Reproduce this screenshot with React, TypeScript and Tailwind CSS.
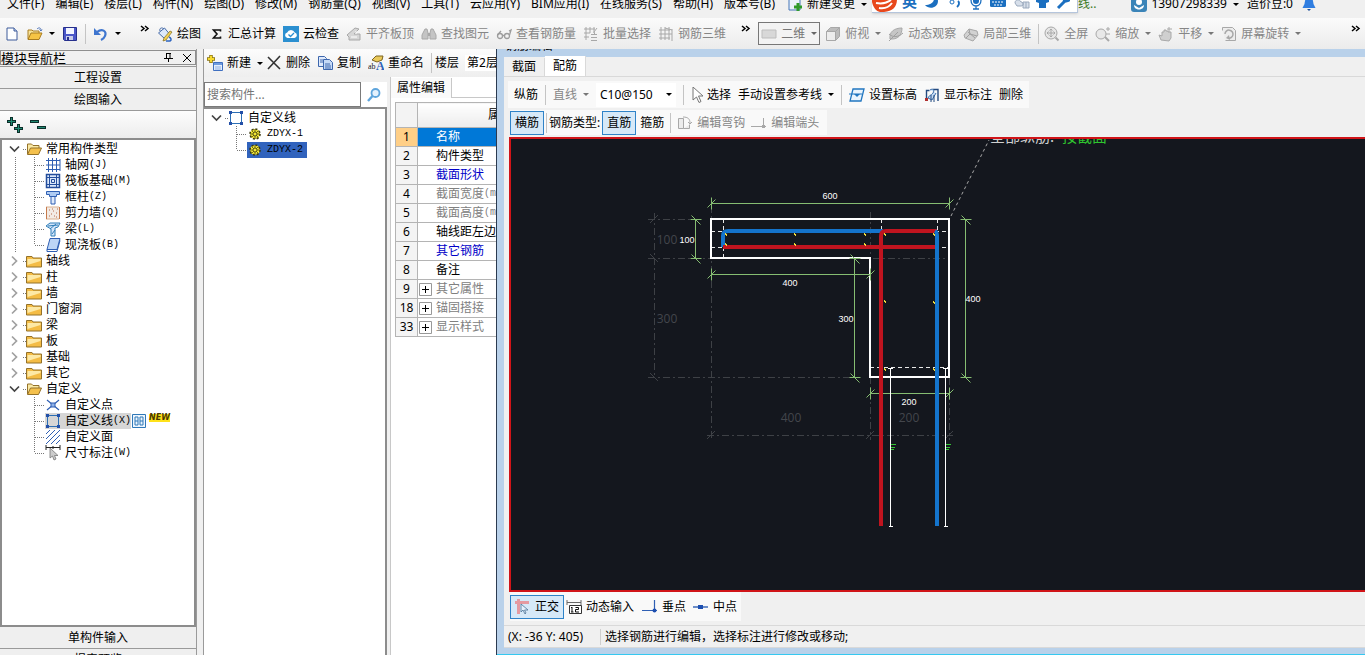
import type { ReactNode } from "react";
import clsx from "clsx";

const BLUE = "#2f5fb3";
const GRAY = "#a8a8a8";

/* 16x16 glyphs used by the toolbars and the trees */
const ICONS: Record<string, ReactNode> = {
  newFile: (
    <>
      <path d="M3 2h7l3 3v9H3z" fill="#fdfeff" stroke="#3c5a9a" />
      <path d="M10 2v3h3" fill="#c5d6f2" stroke="#3c5a9a" />
    </>
  ),
  open: (
    <>
      <path d="M1 13V4h4l1 1h6v3" fill="#f8e49a" stroke="#a97c20" />
      <path d="M1 13.500 4 7h11l-3 6.500z" fill="#f6c445" stroke="#a97c20" />
      <path d="M10 3c2-2 4-1 4 1m-1.500-.5L14 5l1-1.500" fill="none" stroke="#4f74b8" />
    </>
  ),
  save: (
    <>
      <path d="M1.500 1.500h13v13h-12l-1-1z" fill="#4a56c8" stroke="#262f8c" />
      <path d="M4 2h8v6H4z" fill="#f2f4ff" />
      <path d="M4 10h7v4H4z" fill="#c8cce8" />
      <path d="M5 11h2v3H5z" fill="#262f8c" />
    </>
  ),
  undo: (
    <>
      <path d="M4 6c5-4 10-1 8 4-.6 1.800-2 3-4 4" fill="none" stroke="#3f76cf" strokeWidth="2.200" />
      <path d="M1 2v7h7z" fill="#3f76cf" />
    </>
  ),
  paint: (
    <>
      <path d="m1.500 7 6-5 5 6-5 4.500z" fill="#dce9fb" stroke="#466aa8" />
      <path d="M3 5c-1-3 2-4 4-2" fill="none" stroke="#466aa8" />
      <path d="m15 6-6 8-3 1 1-3 6-7z" fill="#f2d254" stroke="#7f6a1f" strokeWidth=".7" />
      <path d="M12 11c2 1 3 3 1 4H9" fill="none" stroke="#2e65c0" strokeWidth="1.500" />
    </>
  ),
  sigma: <path d="M12.500 5.500V4h-7l3.500 4-3.500 4h7v-1.500" fill="none" stroke="#111" strokeWidth="1.600" />,
  cloud: (
    <>
      <rect width="16" height="16" fill="#2b8fd0" />
      <path d="M4.500 12a2.800 2.800 0 0 1-.3-5.500 4 4 0 0 1 7.500 0A2.800 2.800 0 0 1 11.500 12z" fill="#fff" />
      <path d="m5.500 8.500 2 2 3.500-3.500" fill="none" stroke="#2b8fd0" strokeWidth="1.300" />
    </>
  ),
  level: (
    <>
      <path d="m1 9 8-7 4 1-5 5h6v6H3v-3z" fill="#d6d6d6" stroke={GRAY} />
      <path d="M5 11h6M10 5v3" stroke="#fff" />
    </>
  ),
  find: (
    <>
      <path d="M4 3h2l1 4v6H1V9zM12 3h-2L9 7v6h6V9z" fill="#c4c4c4" stroke={GRAY} />
      <path d="M7 7h2v3H7z" fill={GRAY} />
    </>
  ),
  glasses: (
    <g fill="none" stroke="#9c9c9c" strokeWidth="1.300">
      <circle cx="4" cy="10" r="2.500" />
      <circle cx="11" cy="10" r="2.500" />
      <path d="M6.500 9.500h2M13.500 9 15 4l-2 1M1.500 9 5 5" />
    </g>
  ),
  batch: (
    <>
      <path d="M1 3h11M1 7h6M1 11h5M3 1v13M7 1v6M11 1v6" stroke={GRAY} fill="none" />
      <path d="M8 8h6v1H8zm0 3h6v1H8zm0 3h6v1H8z" fill={GRAY} />
      <path d="m14 2-3 4 1 3" stroke={GRAY} fill="none" />
    </>
  ),
  bars3d: (
    <path d="M1 4h11M1 8h13M1 12h11M3 1v13M7 1v13M11 1v13M14 3v12M7 2l7 2" stroke={GRAY} fill="none" />
  ),
  box2d: <path d="M1 4h14v8H1z" fill="#d8d8d8" stroke="#bdbdbd" />,
  cube: (
    <>
      <path d="M1.500 5.500h9v9h-9z" fill="#ededed" stroke={GRAY} />
      <path d="m1.500 5.500 4-4h9l-4 4zM10.500 14.500l4-4v-9l-4 4z" fill="#bcbcbc" stroke={GRAY} />
    </>
  ),
  orbit: (
    <>
      <path d="M2 13C1 6 6 2 14 2c0 7-4 11-10 11z" fill="#c6c6c6" stroke={GRAY} />
      <path d="M1 15 10 6M1 8c4 4 10 3 14-1" fill="none" stroke="#a0a0a0" />
    </>
  ),
  local3d: (
    <>
      <path d="m1 9 5-6 8 2 1 4-5 6-8-3z" fill="#d2d2d2" stroke={GRAY} />
      <path d="m6 3 1 5 7 2M7 8l-4 4M5 6l7 6" fill="none" stroke="#a0a0a0" />
    </>
  ),
  full: (
    <g fill="none" stroke={GRAY}>
      <circle cx="7" cy="7" r="6" fill="#e6e6e6" />
      <path d="M7 3v8M3 7h8M5.500 4.500 7 3l1.500 1.500M5.500 9.500 7 11l1.500-1.500M4.500 5.500 3 7l1.500 1.500M9.500 5.500 11 7 9.500 8.500" />
      <path d="m11.500 11.500 3 3" strokeWidth="2" />
    </g>
  ),
  zoom: (
    <g fill="none" stroke={GRAY}>
      <circle cx="6" cy="8" r="5" fill="#e8e8e8" />
      <path d="m10 11 4 4" strokeWidth="2" />
      <path d="M11 3h4M13 1v4M11 8h4" />
    </g>
  ),
  pan: (
    <>
      <path d="M3 14 1 9l3 1V6h2V4h2v1h2v1h3v6l-2 3z" fill="#cfcfcf" stroke={GRAY} />
      <path d="M11 1v5M9 3h5" stroke={GRAY} />
    </>
  ),
  spin: (
    <>
      <path d="M1.500 4.500v-3h10l3 3v10h-10" fill="#ededed" stroke={GRAY} />
      <path d="M4 8a4 4 0 1 1 3 4" fill="none" stroke={GRAY} strokeWidth="1.500" />
      <path d="m8 9-3 3 4 2z" fill={GRAY} />
    </>
  ),
  addItem: (
    <>
      <path d="M4 0v8M0 4h8" stroke="#8a7410" strokeWidth="3.500" />
      <path d="M4 .8v6.400M.8 4h6.400" stroke="#f6d92e" strokeWidth="2" />
      <path d="M6.500 7.500h9v8h-9z" fill="#e4eefc" stroke="#3f6fc0" />
      <path d="M7 8h8v2H7z" fill="#6e9be0" />
      <path d="M8 12h6M8 14h6" stroke="#8fb0e6" />
    </>
  ),
  cross: <path d="m2 2 12 12M14 1 2 14" stroke="#333" strokeWidth="1.600" />,
  copy: (
    <>
      <path d="M1.500 1.500h6l2 2v8h-8z" fill="#dfeafb" stroke="#3c66ad" />
      <path d="M6.500 4.500h6l3 3v7h-9z" fill="#c5daf7" stroke="#3c66ad" />
      <path d="M3 5h3M3 7h3M8 9h5M8 11h6M8 13h6" stroke="#3c66ad" />
    </>
  ),
  search: (
    <>
      <circle cx="9.500" cy="6" r="4" fill="#e4f1fd" stroke="#5fa5dc" strokeWidth="1.800" />
      <path d="M6.500 9 2 14" stroke="#5fa5dc" strokeWidth="2.400" />
    </>
  ),
  arrow: <path d="M4 0v13l3.500-3 2.500 5.500 2-1-2.500-5.500H14z" fill="#fff" stroke="#777" />,
  elevation: (
    <>
      <path d="M4 2h11l-3 12H1z" fill="#eaf4fd" stroke="#2176c0" strokeWidth="1.300" />
      <path d="M0 7h13" stroke="#2176c0" />
      <path d="M5 7h6l-3 3z" fill="#2176c0" />
    </>
  ),
  annotate: (
    <>
      <path d="M2.500 14V3.500h3M9 2.500h5V14" fill="none" stroke="#234a80" strokeWidth="1.400" />
      <path d="M6 3c3-2 5 0 3 3s-3 1-5 5l4 2 4-7" fill="#c6ddf6" stroke="#3a6ca8" />
      <path d="M1 11h3v3H1z" fill="#b03030" />
      <path d="M7 8v7M10 8v7" stroke="#234a80" />
    </>
  ),
  hook: (
    <>
      <path d="M1.500 3.500h5v10h-5zM6.500 13.500h6v-4" fill="#ececec" stroke={GRAY} />
      <path d="M6 2c5 0 7 2 7 6m-2-1 2 2 2-2" fill="none" stroke={GRAY} />
    </>
  ),
  endpoint: (
    <>
      <path d="M0 11.500h15M12.500 3v9" stroke={GRAY} />
      <path d="M11 10h3v3h-3z" fill={GRAY} />
    </>
  ),
  ortho: (
    <>
      <path d="M0 3.500h14M3.500 0v15" stroke="#e59aa0" strokeWidth="3" />
      <path d="M6 5v8l2-2 2 4 1-1-1.500-3H13z" fill="#e6f1fb" stroke="#4a7296" strokeWidth=".8" />
    </>
  ),
  dyninput: (
    <>
      <path d="M1 1v5M15 1v5M1 3.500h14" stroke="#666" fill="none" />
      <path d="M3.500 6.500h12v8h-12z" fill="#fff" stroke="#333" />
      <path d="M6 8v5M5 9l1-1M5 13h2.500M9.500 8.500h3v2h-3v2.500h3.500" stroke="#111" fill="none" />
    </>
  ),
  perp: (
    <>
      <path d="M0 11.500h15M12.500 1v11" stroke={BLUE} strokeWidth="1.200" />
      <circle cx="12.500" cy="11.500" r="2" fill="#1d4fb0" />
    </>
  ),
  midpoint: (
    <>
      <path d="M0 8h15" stroke={BLUE} strokeWidth="1.400" />
      <path d="M5 6h5v4H5z" fill="#1d4fb0" />
    </>
  ),
  folder: (
    <>
      <path d="M.5 3.500H6L7 5h8.500v9H.5z" fill="#f4bc45" stroke="#94722a" />
      <path d="M1.500 6h13v2l-13 4z" fill="#fde9a6" />
    </>
  ),
  folderOpen: (
    <>
      <path d="M1.500 13V3h4l1.500 1.500h6V7" fill="#fae9a4" stroke="#94722a" />
      <path d="m1.500 13.500 3-6.500h11l-3 6.500z" fill="#f4c04c" stroke="#94722a" />
    </>
  ),
  grid: <path d="M1 3.500h14M1 8h14M1 12.500h14M3.500 1v14M7.500 1v14M11.500 1v14M15 2v12" stroke={BLUE} fill="none" />,
  raft: (
    <g fill="none" stroke="#244e9c">
      <path d="M1.500 1.500h13v13h-13z" fill="#dbe8fb" strokeWidth="1.500" />
      <path d="M4.500 4.500h7v7h-7zM6.500 6.500h3v3h-3zM1 4.500h14M1 11.500h14M4.500 1v14M11.500 1v14" />
    </g>
  ),
  column: (
    <>
      <path d="M1.500 2.500h13v3h-3v2h-7v-2h-3z" fill="#aecbf3" stroke={BLUE} />
      <path d="M6 7.500h4V15H6z" fill="#dfeafb" stroke={BLUE} />
    </>
  ),
  shearWall: (
    <>
      <path d="M1 2h13v12H1z" fill="#f3ebe4" />
      <path d="M1 2h13M1 14h13" stroke="#d9b090" />
      <path d="M14.500 2v12M1.500 2v12" stroke="#c77a4b" />
      <path d="M4 5h1M8 6h1M6 9h1M11 8h1M4 11h1M9 11h1M12 4h1M7 4h1M11 12h1" stroke="#b86a4a" />
    </>
  ),
  beam: (
    <>
      <path d="M1 5 5 2h10l-2 4-3 1v8H6V8z" fill="#d4e5fa" stroke="#2f7fb8" />
      <path d="m3 5 10-1M5 8l6-5M7 13l3-4" stroke="#2f7fb8" fill="none" />
    </>
  ),
  slab: (
    <>
      <path d="M5 1.500h10l-3 11H2z" fill="#bcd5f6" stroke={BLUE} />
      <path d="M2 12.500v2h10l3-11" fill="none" stroke={BLUE} />
    </>
  ),
  customPoint: (
    <>
      <path d="m2 3 12 10M14 3 2 13" stroke={BLUE} strokeWidth="1.200" />
      <path d="M6 6h4v4H6z" fill="#8fb2ea" stroke={BLUE} />
    </>
  ),
  customLine: (
    <>
      <path d="M2.500 2.500h11v11h-11z" fill="none" stroke="#2b6fb5" />
      <path d="M1 1h3v3H1zM12 1h3v3h-3zM1 12h3v3H1zM12 12h3v3h-3z" fill="#2450a8" />
    </>
  ),
  customFace: <path d="m1 5 4-4M1 10l9-9M1 15 15 1M6 15l9-9M11 15l4-4" stroke={BLUE} fill="none" />,
  dimension: (
    <>
      <path d="M1 0v5M15 0v5M1 2.500h14M8 1v3" stroke="#222" />
      <path d="M5 3v10l2.500-2L9 15l2-1-1.500-3.500H13z" fill="#ccc" stroke="#777" strokeWidth=".8" />
    </>
  ),
  gear: (
    <>
      <circle cx="8" cy="8" r="5" fill="#f3e835" stroke="#3a3810" strokeDasharray="2 1.900" strokeWidth="1.600" />
      <path d="M8 3v10M3 8h10M4.500 4.500l7 7M11.500 4.500l-7 7" stroke="#4a4712" strokeWidth=".8" />
      <circle cx="8" cy="8" r="2" fill="#f3e835" stroke="#3a3810" strokeWidth=".8" />
    </>
  ),
  manual: (
    <>
      <path d="M1.500 1.500h13v13h-13z" fill="#eef6fe" stroke="#2f78b8" />
      <path d="M4 4h3v8H4zM9 4h3v8H9zM4 8h3M9 8h3" fill="none" stroke="#2f78b8" />
    </>
  ),
  change: (
    <>
      <path d="M2 0h11v14H2z" fill="#eaf2fd" stroke="#4777b8" />
      <path d="M11 7v8M7 11h8" stroke="#2f9a2c" strokeWidth="3" />
    </>
  ),
  user: (
    <>
      <rect width="16" height="16" rx="3" fill="#3b84b8" />
      <circle cx="8" cy="6" r="3" fill="#fff" />
      <path d="M3 9c0 6 10 6 10 0l-5 3z" fill="#fff" />
    </>
  ),
  bell: (
    <>
      <path d="M8 1c4 0 4 4 4.500 7l2 4h-13l2-4C4 5 4 1 8 1z" fill="#2f7de0" />
      <path d="M6 13h4l-2 2z" fill="#1b4f9c" />
    </>
  ),
};

function Icon({ name, className = "size-4" }: { name: string; className?: string }) {
  return (
    <svg viewBox="0 0 16 16" fill="none" className={clsx("shrink-0", className)} aria-hidden="true">
      {ICONS[name]}
    </svg>
  );
}

function RenameIcon() {
  return (
    <svg viewBox="0 0 16 16" className="size-4 shrink-0" aria-hidden="true">
      <path d="m4 5 4-4h7l-1 4-5 2z" fill="#e9c95a" stroke="#7d6420" />
      <text x="0" y="14" fontSize="8" fontFamily="Liberation Serif" fill="#222">ab</text>
      <text x="8" y="15" fontSize="12" fontWeight="bold" fontFamily="Liberation Serif" fill="#2e62b8">A</text>
    </svg>
  );
}

function Caret({ className = "text-black" }: { className?: string }) {
  return (
    <svg viewBox="0 0 6 3" className={clsx("h-[3px] w-1.5 shrink-0", className)} aria-hidden="true">
      <path d="M0 0h6L3 3z" fill="currentColor" />
    </svg>
  );
}

function Sep() {
  return <span className="h-5 w-px shrink-0 bg-[#c4c4c4]" />;
}

function More() {
  return (
    <button aria-label="更多" className="h-5 w-2.5 shrink-0">
      <svg viewBox="0 0 10 20" className="h-5 w-2.5">
        <path d="m1 2 3 2.500L1 7M5 2l3 2.500L5 7" fill="none" stroke="#000" strokeWidth="1.500" />
      </svg>
    </button>
  );
}

interface ToolProps {
  icon?: ReactNode;
  label: string;
  caret?: boolean;
  disabled?: boolean;
  active?: boolean;
}

function Tool({ icon, label, caret, disabled, active }: ToolProps) {
  return (
    <button
      disabled={disabled}
      className={clsx(
        "flex shrink-0 items-center gap-1 whitespace-nowrap",
        disabled ? "text-[#868686]" : "text-black",
        active && "h-6 border border-[#2f83c8] bg-[#d6e9f8] px-1"
      )}
    >
      {typeof icon === "string" ? <Icon name={icon} /> : icon}
      {label}
      {caret && <Caret className={disabled ? "ml-0.5 text-[#777]" : "ml-0.5 text-black"} />}
    </button>
  );
}

const MENUS = [
  "文件(F)", "编辑(E)", "楼层(L)", "构件(N)", "绘图(D)", "修改(M)", "钢筋量(Q)",
  "视图(V)", "工具(T)", "云应用(Y)", "BIM应用(I)", "在线服务(S)", "帮助(H)", "版本号(B)",
];

function MenuBar() {
  return (
    <div className="relative h-[18px] shrink-0 bg-[#f0f0f0]">
      <div className="-mt-1 flex h-4 items-center pr-12 pl-[7px] leading-4">
        <nav className="flex items-center gap-[11px]">
          {MENUS.map((m) => (
            <button key={m} className="whitespace-nowrap">{m}</button>
          ))}
        </nav>
        <button className="ml-3 flex items-center gap-1 whitespace-nowrap">
          <Icon name="change" />
          新建变更
          <Caret className="ml-0.5" />
        </button>
        <div className="flex flex-1 items-center justify-end gap-2">
          <button className="flex items-center gap-1 whitespace-nowrap">
            <Icon name="user" />
            13907298339
            <Caret className="ml-0.5" />
          </button>
          <a href="#beans" className="whitespace-nowrap">造价豆:0</a>
          <button aria-label="通知"><Icon name="bell" /></button>
        </div>
      </div>
      <InputMethodBar />
    </div>
  );
}

function InputMethodBar() {
  return (
    <div className="absolute top-0 left-[872px] flex h-[13px] items-start">
      <div className="flex h-[13px] items-end border-r border-b border-[#b5c5dc] bg-white shadow-sm">
        <svg viewBox="0 0 205 13" className="h-[13px] w-[205px]" aria-hidden="true">
          <path d="M0 3C2 11 6 14 12 13c9-1 13-5 13-13H0z" fill="#e8481c" />
          <path d="M4 4c5 1 11 0 15-3M7 9c5 1 10-1 13-5" fill="none" stroke="#fff" strokeWidth="2" />
          <text x="30" y="8" fontSize="15" fontWeight="bold" fontFamily="Noto Sans CJK SC" fill="#1b6fc0">英</text>
          <path d="M62-3c1 6-3 9-9 9 4 5 13 3 13-4 0-2-2-4-4-5z" fill="#1b6fc0" />
          <circle cx="80" cy="3" r="2" fill="none" stroke="#1b6fc0" />
          <path d="M86 2c2 2 1 4-1 6" fill="none" stroke="#1b6fc0" strokeWidth="1.800" />
          <rect x="101" y="-4" width="6" height="9" rx="3" fill="#1b6fc0" />
          <path d="M99 1c0 8 10 8 10 0M104 7v3M101 10h6" fill="none" stroke="#1b6fc0" strokeWidth="1.300" />
          <rect x="118" y="-3" width="16" height="11" rx="1.500" fill="#1b6fc0" />
          <path d="M120 0h12M120 3h12M122 6h8" stroke="#fff" strokeDasharray="2 1" />
          <path d="M143 4c0-4 5-4 6-1 3 0 3 4 0 4h-4zM151 3h6v6h-6zM154 3v6" fill="#d7dfea" stroke="#9aa9bd" />
          <path d="M164 0h13v3l-3 1v5h-7V4l-3-1z" fill="#1b6fc0" />
          <path d="m186 9 7-7" stroke="#1b6fc0" strokeWidth="3" />
          <path d="M190-2c0 5 4 7 8 4V-2z" fill="#1b6fc0" />
        </svg>
      </div>
      <span className="-mt-1 leading-4 text-[#3c7a1e]">线..</span>
    </div>
  );
}

function MainToolbar() {
  return (
    <div className="flex h-[31px] shrink-0 items-center gap-[7px] overflow-hidden bg-linear-to-b from-[#fbfbfb] to-[#ebebeb] px-1">
      <button aria-label="新建"><Icon name="newFile" /></button>
      <button aria-label="打开" className="flex items-center gap-1.5"><Icon name="open" /><Caret /></button>
      <button aria-label="保存"><Icon name="save" /></button>
      <Sep />
      <button aria-label="撤销" className="flex items-center gap-1.5"><Icon name="undo" /><Caret /></button>
      <div className="ml-3 flex"><More /></div>
      <Tool icon="paint" label="绘图" />
      <Tool icon="sigma" label="汇总计算" />
      <Tool icon="cloud" label="云检查" />
      <Tool icon="level" label="平齐板顶" disabled />
      <Tool icon="find" label="查找图元" disabled />
      <Tool icon="glasses" label="查看钢筋量" disabled />
      <Tool icon="batch" label="批量选择" disabled />
      <Tool icon="bars3d" label="钢筋三维" disabled />
      <div className="ml-2 flex"><More /></div>
      <label className="-mr-0.5 flex h-[23px] w-[62px] shrink-0 items-center gap-1 border border-[#777] bg-[#f3f3f3] px-0.5 text-[#777]">
        <Icon name="box2d" />
        <select aria-label="视图模式" className="w-7 min-w-0 flex-1 appearance-none">
          <option>二维</option>
        </select>
        <Caret className="text-[#666]" />
      </label>
      <Tool icon="cube" label="俯视" caret disabled />
      <Tool icon="orbit" label="动态观察" disabled />
      <Tool icon="local3d" label="局部三维" disabled />
      <div className="-mr-0.5 flex"><Sep /></div>
      <Tool icon="full" label="全屏" disabled />
      <Tool icon="zoom" label="缩放" caret disabled />
      <Tool icon="pan" label="平移" caret disabled />
      <Tool icon="spin" label="屏幕旋转" caret disabled />
      <div className="ml-auto flex"><More /></div>
    </div>
  );
}

interface Leaf {
  icon: string;
  label: string;
  hotkey?: string;
  selected?: boolean;
}

interface Group {
  label: string;
  children?: Leaf[];
}

const GROUPS: Group[] = [
  {
    label: "常用构件类型",
    children: [
      { icon: "grid", label: "轴网", hotkey: "(J)" },
      { icon: "raft", label: "筏板基础", hotkey: "(M)" },
      { icon: "column", label: "框柱", hotkey: "(Z)" },
      { icon: "shearWall", label: "剪力墙", hotkey: "(Q)" },
      { icon: "beam", label: "梁", hotkey: "(L)" },
      { icon: "slab", label: "现浇板", hotkey: "(B)" },
    ],
  },
  { label: "轴线" },
  { label: "柱" },
  { label: "墙" },
  { label: "门窗洞" },
  { label: "梁" },
  { label: "板" },
  { label: "基础" },
  { label: "其它" },
  {
    label: "自定义",
    children: [
      { icon: "customPoint", label: "自定义点" },
      { icon: "customLine", label: "自定义线", hotkey: "(X)", selected: true },
      { icon: "customFace", label: "自定义面" },
      { icon: "dimension", label: "尺寸标注", hotkey: "(W)" },
    ],
  },
];

function Twisty({ open }: { open: boolean }) {
  return (
    <svg viewBox="0 0 24 16" className="h-4 w-6 shrink-0" aria-hidden="true">
      <path
        d={open ? "m8 5.500 4.500 4.500L17 5.500" : "m10 3.500 4.500 4.500-4.500 4.500"}
        fill="none"
        stroke={open ? "#444" : "#a0a0a0"}
        strokeWidth="1.700"
      />
      <path d="M21 8.500h3" stroke="#777" strokeDasharray="1 1" />
    </svg>
  );
}

function Branch({ last, root }: { last: boolean; root: boolean }) {
  return (
    <svg viewBox="0 0 43 16" className="h-4 w-[43px] shrink-0" aria-hidden="true">
      <g stroke="#777" strokeDasharray="1 1">
        {root && <path d="M13.500 0v16" />}
        <path d={last ? "M32.500 0v8" : "M32.500 0v16"} />
        <path d="M33 8.500h10" />
      </g>
    </svg>
  );
}

function Hotkey({ children }: { children: ReactNode }) {
  return <span className="font-['Liberation_Mono',monospace] text-[10px]">{children}</span>;
}

function ModuleTree() {
  return (
    <ul className="min-h-0 flex-1 overflow-hidden border-2 border-[#8c8c8c] bg-white pt-px leading-4">
      {GROUPS.map((g, gi) => (
        <li key={`${g.label}-${gi}`}>
          <button className="flex h-4 items-center whitespace-nowrap">
            <Twisty open={!!g.children} />
            <Icon name={g.children ? "folderOpen" : "folder"} />
            <span className="ml-1">{g.label}</span>
          </button>
          {g.children && (
            <ul>
              {g.children.map((c, i) => (
                <li key={c.label} className="flex h-4 items-center whitespace-nowrap">
                  <Branch last={i === g.children!.length - 1} root={gi < GROUPS.length - 1} />
                  <button className={clsx("flex h-4 items-center", c.selected && "bg-[#d6d6d6]")}>
                    <Icon name={c.icon} />
                    <span className="ml-1">{c.label}</span>
                    {c.hotkey && <Hotkey>{c.hotkey}</Hotkey>}
                  </button>
                  {c.selected && (
                    <>
                      <Icon name="manual" />
                      <span className="mb-1.5 ml-0.5 bg-[#ffe21a] font-['DejaVu_Sans',sans-serif] text-[8px] leading-2 font-bold text-[#4a3a00] italic">
                        NEW
                      </span>
                    </>
                  )}
                </li>
              ))}
            </ul>
          )}
        </li>
      ))}
    </ul>
  );
}

const NAV_BUTTON = "h-[22px] w-full shrink-0 border-b border-[#9a9a9a] bg-[#efefef] text-center leading-[22px]";

function ModulePanel() {
  return (
    <aside className="flex w-[197px] shrink-0 flex-col border-r border-[#9a9a9a]">
      <div className="mt-px flex h-[15px] shrink-0 items-center border border-[#8e8e8e] text-[13px] leading-3">
        <span>模块导航栏</span>
        <button aria-label="固定" className="ml-auto">
          <svg viewBox="0 0 9 9" className="size-[9px]" aria-hidden="true">
            <path d="M2.500 0v5M2 .5h5M6 0v5M0 5.500h9M4.500 5v4" fill="none" stroke="#000" />
          </svg>
        </button>
        <button aria-label="关闭" className="mr-1 ml-2.5">
          <svg viewBox="0 0 8 8" className="size-2" aria-hidden="true">
            <path d="m0 0 8 8M8 0 0 8" stroke="#000" />
          </svg>
        </button>
      </div>
      <div className="h-0.5 shrink-0 border-b border-[#9a9a9a]" />
      <button className={NAV_BUTTON}>工程设置</button>
      <button className={NAV_BUTTON}>绘图输入</button>
      <div className="flex h-[27px] shrink-0 items-center gap-1.5 bg-linear-to-b from-[#fdfdfd] to-[#ececec] px-1.5">
        <button aria-label="全部展开">
          <svg viewBox="0 0 18 16" className="h-4 w-[18px]" aria-hidden="true">
            <path d="M5.500 0v9M1 4.500h9M12.500 7v9M8 11.500h9" stroke="#0c2f2a" strokeWidth="3" />
            <path d="M5.500 1v7M2 4.500h7M12.500 8v7M9 11.500h7" stroke="#1f8a72" />
          </svg>
        </button>
        <button aria-label="全部折叠">
          <svg viewBox="0 0 18 16" className="h-4 w-[18px]" aria-hidden="true">
            <path d="M0 4.500h9M7 10.500h9" stroke="#0c2f2a" strokeWidth="3" />
            <path d="M1 4.500h7M8 10.500h7" stroke="#1f8a72" />
          </svg>
        </button>
      </div>
      <ModuleTree />
      <button className={NAV_BUTTON}>单构件输入</button>
      <div className="h-1.5 shrink-0 overflow-hidden">
        <button className={NAV_BUTTON}>报表预览</button>
      </div>
    </aside>
  );
}

interface Prop {
  no: number;
  name: string;
  unit?: string;
  tone?: "key" | "muted";
  group?: boolean;
}

const PROPS: Prop[] = [
  { no: 1, name: "名称" },
  { no: 2, name: "构件类型" },
  { no: 3, name: "截面形状", tone: "key" },
  { no: 4, name: "截面宽度", unit: "(mm)", tone: "muted" },
  { no: 5, name: "截面高度", unit: "(mm)", tone: "muted" },
  { no: 6, name: "轴线距左边线距离" },
  { no: 7, name: "其它钢筋", tone: "key" },
  { no: 8, name: "备注" },
  { no: 9, name: "其它属性", tone: "muted", group: true },
  { no: 18, name: "锚固搭接", tone: "muted", group: true },
  { no: 33, name: "显示样式", tone: "muted", group: true },
];

function PropertyTable() {
  return (
    <div className="min-h-0 flex-1 overflow-hidden pt-1 pl-1">
      <table className="w-[212px] table-fixed border-collapse leading-4">
        <thead>
          <tr className="h-[25px]">
            <th className="w-[22px] border border-[#b4b4b4] bg-[#f3f3f3] p-0" />
            <th className="border border-[#b4b4b4] bg-linear-to-b from-white to-[#ececec] p-0 font-normal">属性名称</th>
          </tr>
        </thead>
        <tbody>
          {PROPS.map((p) => (
            <tr key={p.no} className="h-[19px]">
              <td
                className={clsx(
                  "border border-[#b4b4b4] p-0 text-center",
                  p.no === 1 ? "bg-[#ffcf87]" : "bg-[#f4f4f4]"
                )}
              >
                {p.no}
              </td>
              <td
                className={clsx(
                  "border border-[#b4b4b4] p-0",
                  p.no === 1 ? "bg-[#0078d7] text-white" : "bg-white",
                  p.tone === "key" && "text-[#0000c8]",
                  p.tone === "muted" && "text-[#808080]"
                )}
              >
                <div className={clsx("flex items-center whitespace-nowrap", p.group ? "pl-px" : "pl-[18px]")}>
                  {p.group && (
                    <button aria-label={`展开${p.name}`} className="mr-1">
                      <svg viewBox="0 0 13 13" className="size-[13px]" aria-hidden="true">
                        <path d="M.5.5h12v12H.5z" fill="#fff" stroke="#999" />
                        <path d="M3 6.500h7M6.500 3v7" stroke="#000" />
                      </svg>
                    </button>
                  )}
                  {p.name}
                  {p.unit && <Hotkey>{p.unit}</Hotkey>}
                </div>
              </td>
            </tr>
          ))}
        </tbody>
      </table>
    </div>
  );
}

function ComponentPanel() {
  return (
    <section className="ml-1.5 flex w-[293px] shrink-0 flex-col overflow-hidden border-l border-[#9a9a9a]">
      <div className="flex h-7 shrink-0 items-center gap-[7px] bg-linear-to-b from-[#fcfcfc] to-[#eeeeee] pl-[3px]">
        <div className="-mr-1 flex shrink-0"><Tool icon="addItem" label="新建" caret /></div>
        <Tool icon="cross" label="删除" />
        <Tool icon="copy" label="复制" />
        <Tool icon={<RenameIcon />} label="重命名" />
        <Sep />
        <div className="-ml-1 flex shrink-0 items-center gap-1.5">
          <label htmlFor="floor">楼层</label>
          <select id="floor" className="w-20 appearance-none bg-white px-0.5">
            <option>第2层</option>
          </select>
        </div>
      </div>
      <div className="flex min-h-0 flex-1">
        <div className="flex w-[183px] shrink-0 flex-col">
          <div className="mt-[5px] flex h-[25px] shrink-0">
            <input
              type="text"
              aria-label="搜索构件"
              placeholder="搜索构件..."
              className="w-[157px] border border-[#7a7a7a] bg-white px-0.5 placeholder:text-[#757575]"
            />
            <button aria-label="搜索" className="flex flex-1 items-center justify-center bg-white">
              <Icon name="search" />
            </button>
          </div>
          <ul className="min-h-0 flex-1 border-t-2 border-r-2 border-[#8c8c8c] bg-white pt-px leading-4">
            <li className="flex h-4 items-center">
              <button className="flex items-center">
                <Twisty open />
                <Icon name="customLine" />
                <span className="ml-1">自定义线</span>
              </button>
            </li>
            <li className="flex h-4 items-center">
              <Branch last={false} root={false} />
              <button className="flex h-4 items-center gap-1 pr-1">
                <Icon name="gear" />
                <Hotkey>ZDYX-1</Hotkey>
              </button>
            </li>
            <li className="flex h-4 items-center">
              <Branch last root={false} />
              <button className="flex h-4 items-center gap-1 bg-[#3163bd] pr-1">
                <Icon name="gear" />
                <Hotkey>ZDYX-2</Hotkey>
              </button>
            </li>
          </ul>
        </div>
        <div className="ml-[3px] flex min-w-0 flex-1 flex-col overflow-hidden border-l border-[#c8c8c8] bg-white">
          <div className="flex h-[21px] shrink-0 items-end">
            <button className="h-5 shrink-0 border-r border-[#c8c8c8] bg-[#fafafa] px-1.5">属性编辑</button>
            <span className="h-5 flex-1 border-b border-[#c8c8c8]" />
          </div>
          <PropertyTable />
        </div>
      </div>
    </section>
  );
}

const DIM = "#86bd72";

function HDim({ x1, x2, y }: { x1: number; x2: number; y: number }) {
  return (
    <g stroke={DIM}>
      <path d={`M${x1} ${y}H${x2}`} />
      {[x1, x2].map((x) => (
        <path key={x} d={`M${x} ${y - 6}v12M${x - 4} ${y + 4}l8-8`} />
      ))}
    </g>
  );
}

function VDim({ x, y1, y2 }: { x: number; y1: number; y2: number }) {
  return (
    <g stroke={DIM}>
      <path d={`M${x} ${y1}V${y2}`} />
      {[y1, y2].map((y) => (
        <path key={y} d={`M${x - 5} ${y}h11M${x - 4} ${y - 4}l9 9`} />
      ))}
    </g>
  );
}

const DOTS = [
  [725, 233], [725, 243], [794, 233], [794, 243], [864, 233], [864, 243],
  [884, 233], [933, 233], [884, 300], [933, 301], [884, 368], [933, 368],
];

const LABELS: [string, number, number][] = [
  ["600", 830, 199], ["100", 687, 243], ["400", 790, 286], ["300", 846, 322], ["400", 973, 302], ["200", 909, 405],
];

const AXIS_LABELS: [string, number, number][] = [
  ["100", 667, 244], ["300", 667, 323], ["400", 791, 422], ["200", 909, 422],
];

function SectionDrawing() {
  return (
    <svg
      viewBox="511 139 854 451"
      preserveAspectRatio="xMinYMin slice"
      fill="none"
      className="size-full"
      role="img"
      aria-label="截面配筋图"
    >
      {/* axis grid */}
      <g stroke="#3e4146" strokeDasharray="7 3 2 3">
        <path d="M654.500 213v165M711.500 206v234M870.500 212v228M949.500 378v62" />
        <path d="M648 219.500h42M648 258.500h302M648 377.500h206M707 435.500h246" />
      </g>
      <g stroke="#3e4146">
        <path d="m650 223 8-8M650 254l8 8M650 373l8 8M707 439l8-8M866 439l8-8M945 439l8-8" />
      </g>
      <g fill="#43464c" fontFamily="Open Sans, sans-serif" fontSize="12" textAnchor="middle">
        {AXIS_LABELS.map(([t, x, y]) => (
          <text key={`${x}-${y}`} x={x} y={y}>{t}</text>
        ))}
      </g>

      {/* cover lines */}
      <g stroke="#e8e8e8" strokeDasharray="4 3">
        <path d="M711 231.500h238M711 247.500h238M723.500 219v39M881.500 219v12M937.500 219v12M870 367.500h79" />
      </g>
      <path d="M711 219h238v158h-79V258H711z" stroke="#fff" strokeWidth="2" />

      <HDim x1={711.500} x2={949.500} y={203.500} />
      <HDim x1={711.500} x2={870.500} y={274.500} />
      <HDim x1={870.500} x2={949.500} y={393.500} />
      <VDim x={695.500} y1={219.500} y2={258.500} />
      <VDim x={854.500} y1={258.500} y2={377.500} />
      <VDim x={965.500} y1={219.500} y2={377.500} />

      {/* rebar */}
      <g strokeWidth="4">
        <path d="M723 247v-11q0-5 5-5h155" stroke="#1474cc" />
        <path d="M723 247h214M937 231h-51q-5 0-5 5v290" stroke="#c0141f" />
        <path d="M935 231q2 1 2 5v290" stroke="#1474cc" />
      </g>
      {DOTS.map(([x, y]) => (
        <path key={`${x}-${y}`} d={`M${x} ${y}h1v1h1v2h-1v-1h-1z`} fill="#f0dc3c" />
      ))}

      <g stroke="#fff">
        <path d="M890.500 368v158M888 368.500h5M889 526.500h4M945.500 368v158M943 368.500h5M944 526.500h4" />
      </g>
      <path
        d="M891 444.500h5M891 447.500h4M891 449.500h3M946 444.500h5M946 447.500h4M946 449.500h3"
        stroke="#35c435"
      />

      <g fill="#fff" fontFamily="Liberation Sans, sans-serif" fontSize="9" textAnchor="middle">
        {LABELS.map(([t, x, y]) => (
          <text key={`${x}-${y}`} x={x} y={y}>{t}</text>
        ))}
      </g>

      <path d="M951 216 989 140" stroke="#a8a8a8" strokeDasharray="3 3" />
      <g fontFamily="Noto Sans CJK SC, sans-serif" fontSize="15">
        <text x="990" y="142" fill="#d0d0d0">全部纵筋:</text>
        <text x="1062" y="142" fill="#2fc42f">按截面</text>
      </g>
    </svg>
  );
}

function EditorWindow() {
  return (
    <section className="flex min-w-0 flex-1 flex-col border-l border-[#2b3a50] bg-[#b9d1ea]">
      <h2 className="flex h-2 shrink-0 items-end overflow-hidden pb-[3px] pl-2 leading-4">钢筋编辑</h2>
      <div className="ml-[7px] flex min-h-0 flex-1 flex-col bg-[#f0f0f0]">
        <div className="flex h-5 shrink-0 items-end border-b border-[#d9d9d9]" role="tablist">
          <button role="tab" aria-selected="false" className="h-[18px] border-r border-[#d9d9d9] px-2 leading-4">截面</button>
          <button role="tab" aria-selected="true" className="h-5 border-r border-[#d9d9d9] bg-white px-2 leading-4">配筋</button>
        </div>

        <div className="mt-1 ml-1 flex h-[27px] shrink-0">
          <div className="flex items-center gap-[7px] bg-[#f9f9f9] px-1.5">
            <Tool label="纵筋" />
            <Sep />
            <Tool label="直线" caret disabled />
            <div className="flex h-6 w-20 items-center bg-white px-1">
              <select aria-label="钢筋规格" className="min-w-0 flex-1 appearance-none">
                <option>C10@150</option>
              </select>
              <Caret />
            </div>
            <Sep />
            <Tool icon={<Icon name="arrow" className="-mx-0.5 size-4" />} label="选择" />
            <Tool label="手动设置参考线" caret />
            <Sep />
            <Tool icon="elevation" label="设置标高" />
            <Tool icon="annotate" label="显示标注" />
            <Tool label="删除" />
          </div>
        </div>

        <div className="mt-0.5 ml-1.5 flex h-[25px] shrink-0">
          <div className="flex items-center gap-0.5 bg-[#f9f9f9] pr-2">
            <Tool label="横筋" active />
            <Sep />
            <span className="whitespace-nowrap">钢筋类型:</span>
            <Tool label="直筋" active />
            <div className="ml-0.5 flex"><Tool label="箍筋" /></div>
            <div className="mx-1 flex"><Sep /></div>
            <Tool icon="hook" label="编辑弯钩" disabled />
            <div className="ml-1 flex"><Tool icon="endpoint" label="编辑端头" disabled /></div>
          </div>
        </div>

        <div className="mt-0.5 ml-[5px] min-h-0 flex-1 overflow-hidden border-y-2 border-l-2 border-[#d01418] bg-[#14171e]">
          <SectionDrawing />
        </div>

        <div className="ml-1.5 flex h-[29px] shrink-0 items-center">
          <div className="flex h-full items-center gap-0.5 bg-[#f9f9f9] pr-1">
            <Tool icon="ortho" label="正交" active />
            <Tool icon="dyninput" label="动态输入" />
            <div className="ml-1.5 flex gap-[7px]">
              <Tool icon="perp" label="垂点" />
              <Tool icon="midpoint" label="中点" />
            </div>
          </div>
        </div>

        <footer className="mt-1 flex h-[23px] shrink-0 items-center border-y border-[#d9d9d9] leading-4">
          <span className="w-[97px] shrink-0 border-r border-[#cfcfcf] pl-1">(X: -36 Y: 405)</span>
          <span className="pl-1">选择钢筋进行编辑，选择标注进行修改或移动;</span>
        </footer>
      </div>
      <div className="h-[7px] shrink-0 border-b border-[#35c8f0]" />
    </section>
  );
}

export default function App() {
  return (
    <div className="flex h-screen flex-col overflow-hidden bg-[#f0f0f0] font-['Noto_Sans','Noto_Sans_CJK_SC',sans-serif] text-xs text-black">
      <MenuBar />
      <MainToolbar />
      <main className="flex min-h-0 flex-1">
        <ModulePanel />
        <ComponentPanel />
        <EditorWindow />
      </main>
    </div>
  );
}
